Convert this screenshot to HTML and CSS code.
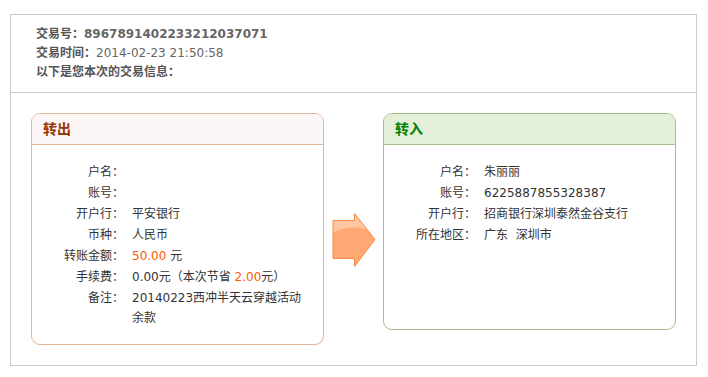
FILE: index.html
```html
<!DOCTYPE html>
<html lang="zh-CN">
<head>
  <meta charset="UTF-8">
  <title>交易详情</title>
  <link rel="stylesheet" href="styles.css">
</head>
<body>
  <div class="box">
    <div class="info">
      <div><b>交易号：</b><span class="trade-no">8967891402233212037071</span></div>
      <div><b>交易时间：</b><span class="trade-time">2014-02-23 21:50:58</span></div>
      <div><b>以下是您本次的交易信息：</b></div>
    </div>

    <div class="transfer">
      <div class="card card-out">
        <div class="card-head">转出</div>
        <div class="card-body">
          <div class="row"><span class="label">户名：</span><span class="value"></span></div>
          <div class="row"><span class="label">账号：</span><span class="value"></span></div>
          <div class="row"><span class="label">开户行：</span><span class="value">平安银行</span></div>
          <div class="row"><span class="label">币种：</span><span class="value">人民币</span></div>
          <div class="row"><span class="label">转账金额：</span><span class="value"><span class="money">50.00</span> 元</span></div>
          <div class="row"><span class="label">手续费：</span><span class="value">0.00元（本次节省 <span class="money">2.00</span>元）</span></div>
          <div class="row"><span class="label">备注：</span><span class="value">20140223西冲半天云穿越活动余款</span></div>
        </div>
      </div>

      <div class="arrow">
        <svg width="44" height="56" viewBox="0 0 44 56">
          <path d="M1 8.5 H22.5 V1.5 L43 27.5 L22.5 54.5 V46.5 H1 Z" fill="#ffa874" stroke="#f98a45"/>
          <path d="M1.5 9 H23 V3 L34 17 Q18 13 1.5 20 Z" fill="#fff" opacity="0.35"/>
        </svg>
      </div>

      <div class="card card-in">
        <div class="card-head">转入</div>
        <div class="card-body">
          <div class="row"><span class="label">户名：</span><span class="value">朱丽丽</span></div>
          <div class="row"><span class="label">账号：</span><span class="value">6225887855328387</span></div>
          <div class="row"><span class="label">开户行：</span><span class="value">招商银行深圳泰然金谷支行</span></div>
          <div class="row"><span class="label">所在地区：</span><span class="value">广东&nbsp;&nbsp;深圳市</span></div>
        </div>
      </div>
    </div>
  </div>
</body>
</html>
```

FILE: styles.css
```css
body {
  margin: 0;
  padding: 14px 0 0 10px;
  font-family: "DejaVu Sans", "Noto Sans CJK SC", sans-serif;
  font-size: 12px;
  color: #333;
  background: #fff;
}
.box {
  width: 687px;
  box-sizing: border-box;
  border: 1px solid #ccc;
}
.info {
  padding: 10px 25px 10px;
  line-height: 19px;
  color: #555;
  border-bottom: 1px solid #ccc;
}
.info b {
  color: #555;
}
.trade-no {
  font-weight: bold;
  color: #666;
}
.trade-time {
  color: #666;
}
.transfer {
  display: flex;
  align-items: flex-start;
  padding: 20px 20px 20px 20px;
}
.card {
  width: 293px;
  box-sizing: border-box;
  border: 1px solid;
  border-radius: 9px;
  overflow: hidden;
}
.card-head {
  height: 30px;
  line-height: 30px;
  padding-left: 11px;
  font-size: 14px;
  font-weight: bold;
  border-bottom: 1px solid;
}
.card-body {
  display: flex;
  flex-direction: column;
  gap: 1px;
  padding: 17px 20px 16px 0;
}
.row {
  display: grid;
  grid-template-columns: 92px 1fr;
  column-gap: 8px;
  line-height: 20px;
}
.label {
  text-align: right;
}
.money {
  color: #ff5a00;
}
.card-out {
  border-color: #e2b595;
}
.card-out .card-head {
  background: #fcf6f6;
  border-color: #e2b595;
  color: #993300;
}
.card-in {
  height: 217px;
  border-color: #a6bf8a;
}
.card-in .card-head {
  background: #e3efd7;
  border-color: #a6bf8a;
  color: #008000;
}
.arrow {
  width: 59px;
  display: flex;
  justify-content: center;
  margin-top: 99px;
}
.arrow svg {
  display: block;
}
```
